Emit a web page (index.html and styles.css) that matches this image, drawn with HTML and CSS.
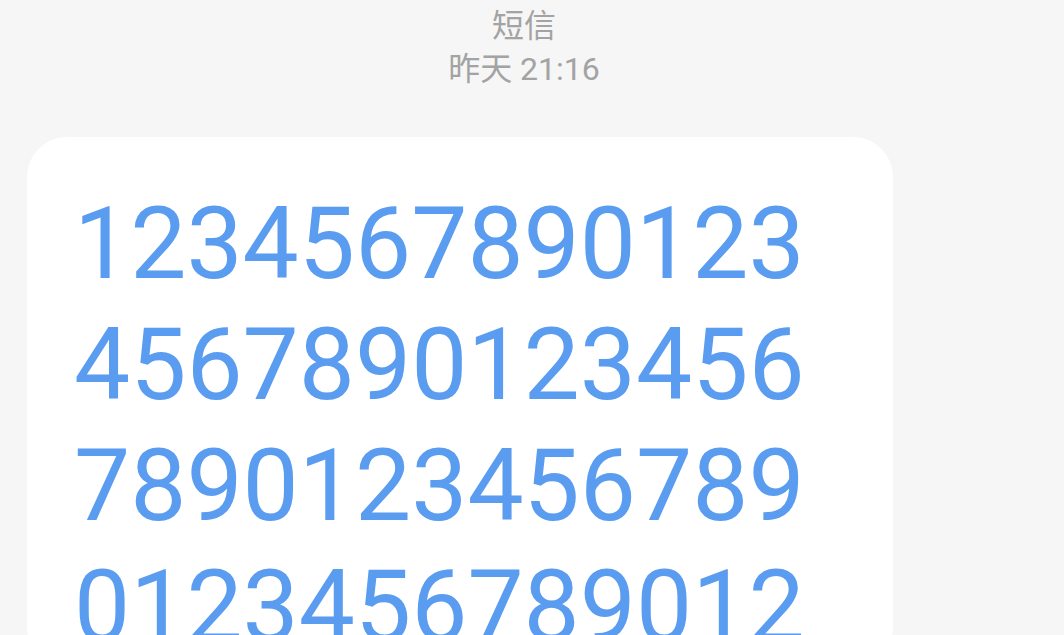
FILE: index.html
```html
<!DOCTYPE html>
<html lang="zh-CN">
<head>
    <meta charset="UTF-8">
    <meta name="viewport" content="width=device-width, initial-scale=1.0">
    <title>短信</title>
    <link rel="stylesheet" href="styles.css">
</head>
<body>
    <div class="header">
        <div class="title">短信</div>
        <div class="time">昨天 21:16</div>
    </div>

    <div class="bubble">
        <div class="line">1234567890123</div>
        <div class="line">4567890123456</div>
        <div class="line">7890123456789</div>
        <div class="line">0123456789012</div>
    </div>
</body>
</html>
```

FILE: styles.css
```css
body {
    margin: 0;
    height: 635px;
    overflow: hidden;
    background-color: #f6f6f6;
    font-family: Roboto, "Noto Sans CJK SC", sans-serif;
}

.header {
    padding: 5px 16px 0 0;
    text-align: center;
    color: #a3a3a3;
    font-size: 32px;
    line-height: 43px;
}

.bubble {
    margin: 46px 0 0 27px;
    padding: 46px 0 0 47px;
    width: 819px;
    background-color: #fff;
    border-radius: 40px;
}

.line {
    color: #5a9cf0;
    font-size: 100px;
    line-height: 121px;
    white-space: nowrap;
}
```
